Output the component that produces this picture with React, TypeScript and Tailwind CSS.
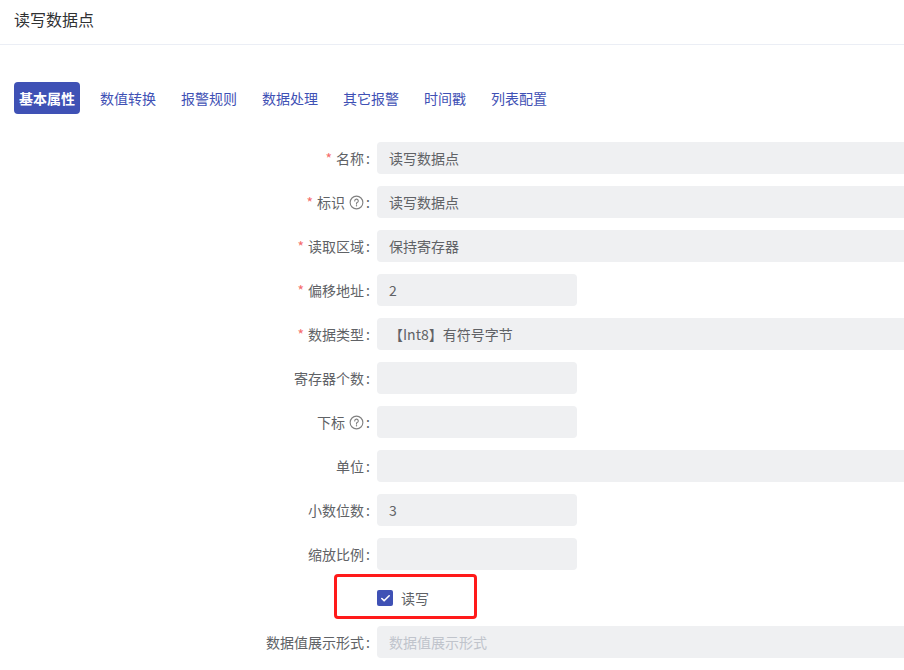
import { Check } from "lucide-react";

const TABS = ["基本属性", "数值转换", "报警规则", "数据处理", "其它报警", "时间戳", "列表配置"];

type Field = {
  label: string;
  value?: string;
  placeholder?: string;
  required?: boolean;
  help?: boolean;
  short?: boolean;
};

const FIELDS: Field[] = [
  { label: "名称", value: "读写数据点", required: true },
  { label: "标识", value: "读写数据点", required: true, help: true },
  { label: "读取区域", value: "保持寄存器", required: true },
  { label: "偏移地址", value: "2", required: true, short: true },
  { label: "数据类型", value: "【Int8】有符号字节", required: true },
  { label: "寄存器个数", short: true },
  { label: "下标", help: true, short: true },
  { label: "单位" },
  { label: "小数位数", value: "3", short: true },
  { label: "缩放比例", short: true },
];

function HelpIcon() {
  return (
    <svg viewBox="0 0 16 16" className="ml-[4px] h-[15px] w-[15px] text-[#808080]">
      <circle cx="8" cy="8" r="6.8" fill="none" stroke="currentColor" strokeWidth="1.2" />
      <path
        d="M6.1 6.3a1.9 1.9 0 1 1 2.6 1.8c-.5.2-.7.6-.7 1.1v.5"
        fill="none"
        stroke="currentColor"
        strokeWidth="1.2"
        strokeLinecap="round"
      />
      <circle cx="8" cy="11.4" r="0.75" fill="currentColor" />
    </svg>
  );
}

function FormRow({ field }: { field: Field }) {
  return (
    <div className="mb-[12px] flex h-[32px] items-center">
      <label className="flex w-[377px] shrink-0 items-center justify-end pr-[7px] text-[14px] text-[#606266]">
        {field.required && <span className="mr-[4px] text-[#f56c6c]">*</span>}
        {field.label}
        {field.help && <HelpIcon />}
        <span className="ml-[2px]">:</span>
      </label>
      <div
        className={
          field.short
            ? "flex h-[32px] w-[200px] items-center rounded-[4px] bg-[#eff0f2] px-[12px] text-[14px] text-[#606266]"
            : "-mr-[8px] flex h-[32px] flex-1 items-center rounded-[4px] bg-[#eff0f2] px-[12px] text-[14px] text-[#606266]"
        }
      >
        {field.value}
        {field.placeholder && <span className="text-[#c0c4cc]">{field.placeholder}</span>}
      </div>
    </div>
  );
}

export default function App() {
  return (
    <div
      className="h-[670px] w-[904px] overflow-hidden bg-white"
      style={{ fontFamily: '"Noto Sans CJK SC", "Noto Sans", sans-serif' }}
    >
      {/* Header */}
      <div className="h-[45px] border-b border-[#ebeef5] px-[14px] pt-[7px] text-[16px] leading-[24px] text-[#303133]">
        读写数据点
      </div>

      {/* Tabs */}
      <div className="mt-[37px] flex items-center gap-[15px] pl-[14px]">
        {TABS.map((t, i) => (
          <div
            key={t}
            className={
              i === 0
                ? "flex h-[32px] items-center rounded-[4px] bg-[#3f51b5] px-[5px] text-[14px] font-semibold text-white"
                : "flex h-[32px] items-center px-[5px] text-[14px] text-[#3f51b5]"
            }
          >
            {t}
          </div>
        ))}
      </div>

      {/* Form */}
      <div className="mt-[28px] overflow-hidden">
        {FIELDS.map((f) => (
          <FormRow key={f.label} field={f} />
        ))}

        {/* 读写 checkbox, highlighted */}
        <div className="relative mb-[12px] flex h-[32px] items-center pl-[377px]">
          <div className="flex h-[16px] w-[16px] items-center justify-center rounded-[2px] bg-[#3f51b5]">
            <Check className="h-[11px] w-[11px] text-white" strokeWidth={3.5} />
          </div>
          <span className="ml-[8px] text-[14px] text-[#606266]">读写</span>
          <div className="absolute left-[334px] top-[-8px] h-[45px] w-[143px] rounded-[4px] border-[3px] border-[#ff1a1a]" />
        </div>

        <FormRow field={{ label: "数据值展示形式", placeholder: "数据值展示形式" }} />
      </div>
    </div>
  );
}
